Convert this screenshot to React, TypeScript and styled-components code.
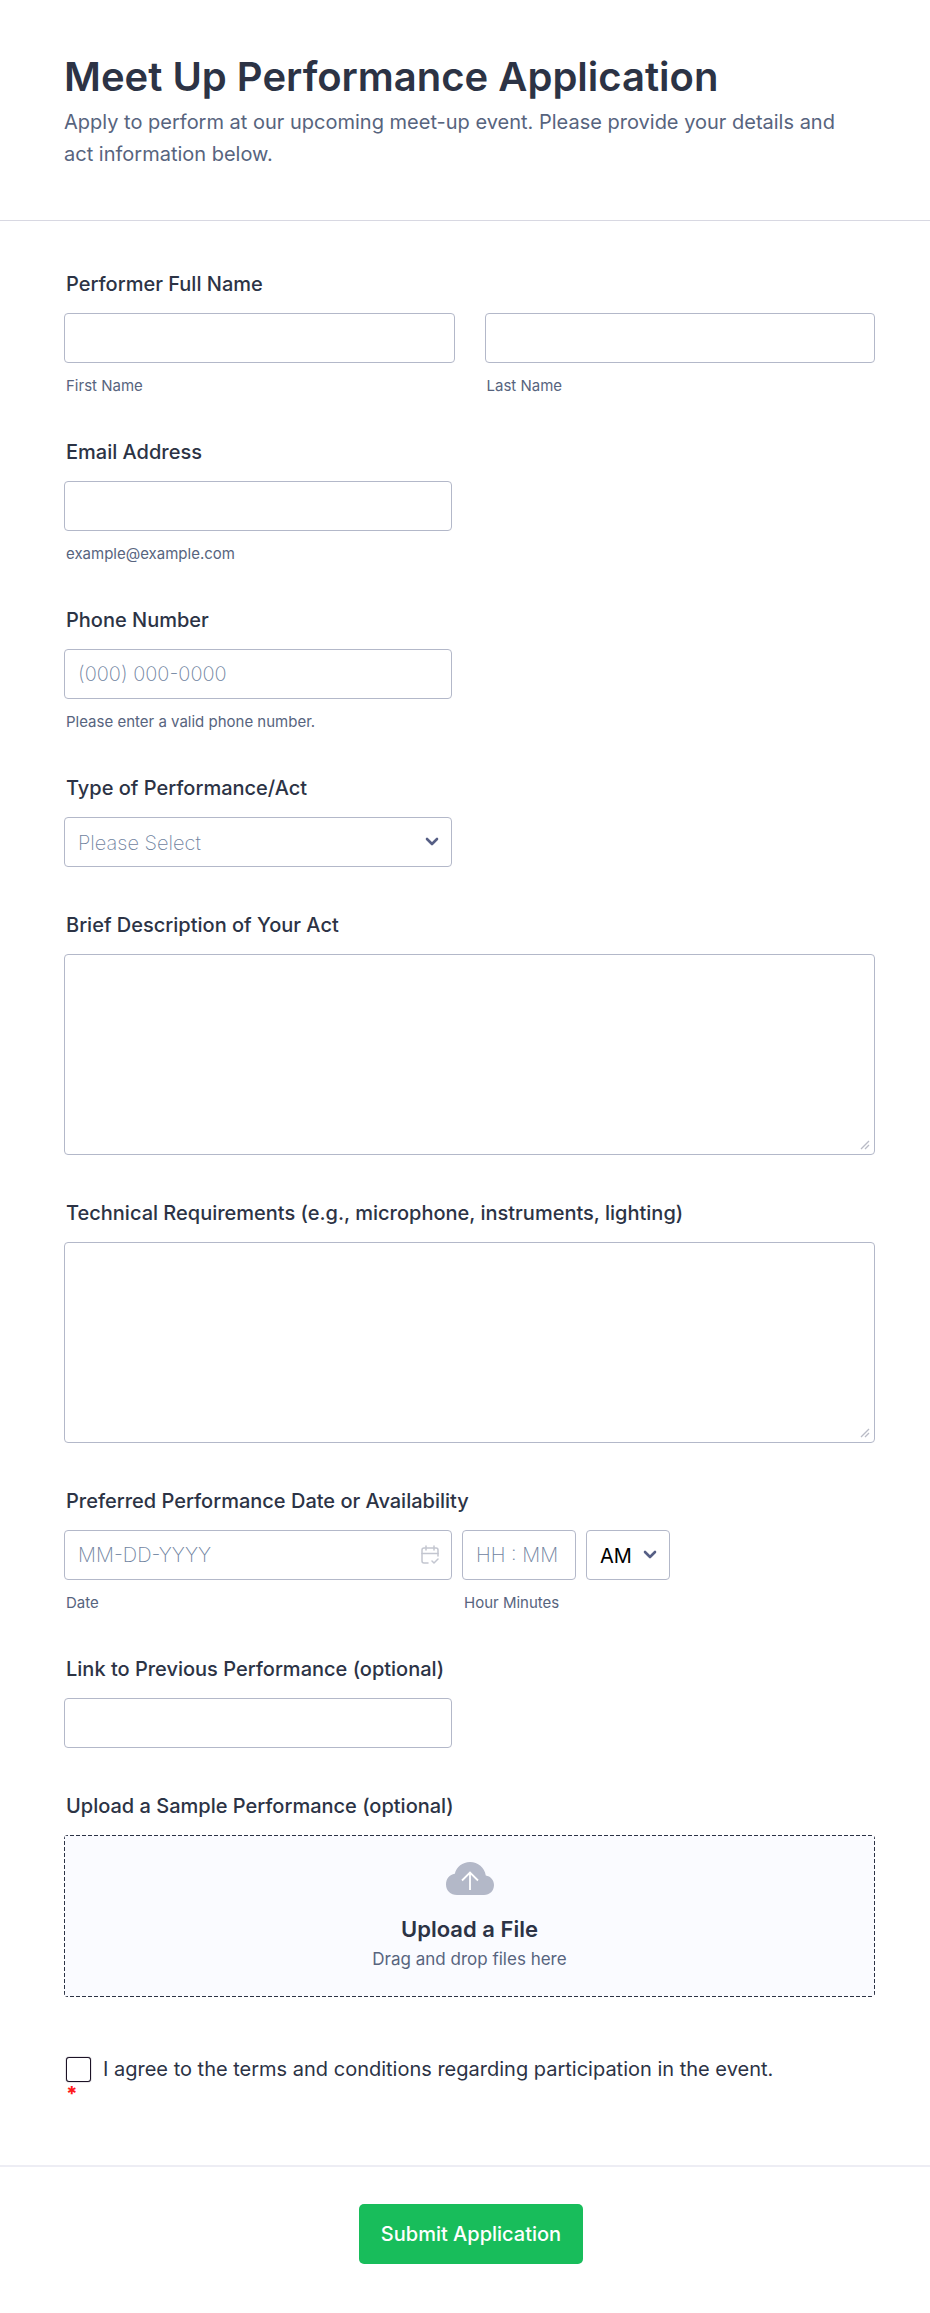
import React from "react";
import styled, { createGlobalStyle } from "styled-components";

const colors = {
  heading: "#2c3345",
  muted: "#57647e",
  placeholder: "#6f83a0",
  border: "#b3b8c9",
  rule: "#d8d8e2",
  softRule: "#ededf4",
  green: "#18bd5b",
  red: "#ff1a1a",
  drop: "#fafbff",
};

const GlobalStyle = createGlobalStyle`
  *, *::before, *::after { box-sizing: border-box; }
  body {
    margin: 0;
    background: #ffffff;
    color: ${colors.heading};
    font-family: Inter, "Liberation Sans", sans-serif;
    font-size: 20px;
  }
  input, select, textarea, button { font: inherit; color: inherit; margin: 0; }
`;

const Form = styled.form`
  display: flex;
  flex-direction: column;
`;

const Header = styled.header`
  padding: 51px 64px 50px;
  border-bottom: 1px solid ${colors.rule};
`;

const Title = styled.h1`
  margin: 0;
  font-size: 40px;
  line-height: 52px;
  font-weight: 600;
`;

const Subtitle = styled.p`
  margin: 3px 0 0;
  max-width: 800px;
  color: ${colors.muted};
  line-height: 32px;
`;

const Fields = styled.div`
  display: flex;
  flex-direction: column;
  gap: 46px;
  padding: 51px 55px 60px 64px;
`;

const Field = styled.div`
  display: flex;
  flex-direction: column;
`;

const Group = styled.fieldset`
  min-width: 0;
  margin: 0;
  padding: 0;
  border: 0;
`;

const labelText = `
  display: block;
  padding: 0 2px;
  margin-bottom: 17px;
  line-height: 24px;
  font-weight: 500;
`;

const Label = styled.label`
  ${labelText}
`;

const Legend = styled.legend`
  ${labelText}
`;

const NameRow = styled.div`
  display: grid;
  grid-template-columns: 1fr 1fr;
  gap: 30px;
`;

const DateRow = styled.div`
  display: flex;
  align-items: flex-start;
  gap: 10px;
`;

const Cell = styled.div<{ $width?: string }>`
  display: flex;
  flex-direction: column;
  width: ${(p) => p.$width ?? "auto"};
  max-width: 100%;
`;

const Caption = styled.label`
  margin-top: 14px;
  padding: 0 2px;
  color: ${colors.muted};
  font-size: 15px;
  line-height: 17px;
  white-space: nowrap;
`;

const controlBox = `
  width: 100%;
  border: 1px solid ${colors.border};
  border-radius: 4px;
  background: #ffffff;
  outline-color: #2e69ff;
`;

const TextInput = styled.input`
  ${controlBox}
  height: 50px;
  padding: 0 13px;
  &::placeholder {
    color: ${colors.placeholder};
    font-weight: 200;
    opacity: 1;
  }
`;

const TextArea = styled.textarea`
  ${controlBox}
  display: block;
  height: 201px;
  padding: 12px 13px;
  resize: vertical;
  &::-webkit-resizer { background: transparent; }
`;

const ControlWrap = styled.div`
  position: relative;
`;

const Select = styled.select<{ $empty?: boolean }>`
  ${controlBox}
  height: 50px;
  padding: 1px 32px 0 13px;
  appearance: none;
  color: ${(p) => (p.$empty ? colors.placeholder : "#000000")};
  font-weight: ${(p) => (p.$empty ? 200 : 400)};
`;

const TrailingIcon = styled.span`
  position: absolute;
  top: 0;
  bottom: 0;
  right: 13px;
  display: flex;
  align-items: center;
  pointer-events: none;
`;

const Grip = styled.span`
  position: absolute;
  right: 5px;
  bottom: 5px;
  display: flex;
  pointer-events: none;
`;

const HALF = "388px";

const DropZone = styled.label`
  display: flex;
  flex-direction: column;
  align-items: center;
  padding: 27px 16px 26px;
  border-radius: 4px;
  background:
    repeating-linear-gradient(90deg, ${colors.heading} 0 4px, transparent 4px 6px) top / 100% 1px no-repeat,
    repeating-linear-gradient(90deg, ${colors.heading} 0 4px, transparent 4px 6px) bottom / 100% 1px no-repeat,
    repeating-linear-gradient(180deg, ${colors.heading} 0 4px, transparent 4px 6px) left / 1px 100% no-repeat,
    repeating-linear-gradient(180deg, ${colors.heading} 0 4px, transparent 4px 6px) right / 1px 100% no-repeat,
    ${colors.drop};
  cursor: pointer;
`;

const HiddenFile = styled.input`
  position: absolute;
  width: 1px;
  height: 1px;
  overflow: hidden;
  clip-path: inset(50%);
`;

const DropTitle = styled.span`
  margin-top: 20px;
  font-size: 22px;
  line-height: 28px;
  font-weight: 600;
`;

const DropHint = styled.span`
  margin-top: 4px;
  color: ${colors.muted};
  font-size: 17px;
  line-height: 24px;
`;

const Terms = styled.div`
  margin-top: 12px;
  padding: 0 2px;
`;

const TermsLabel = styled.label`
  display: flex;
  align-items: center;
  gap: 12px;
  line-height: 28px;
`;

const Checkbox = styled.input`
  appearance: none;
  flex: none;
  width: 25px;
  height: 25px;
  border: 1px solid #1c1226;
  border-radius: 3px;
  background: #ffffff;
  box-shadow: 0 0 1px #1c1226;
  &:checked { background: ${colors.heading}; }
`;

const Required = styled.div`
  color: ${colors.red};
  font-weight: 800;
  line-height: 22px;
`;

const Footer = styled.footer`
  display: flex;
  justify-content: center;
  padding: 37px 48px 49px 60px;
  border-top: 2px solid ${colors.softRule};
  border-bottom: 1px solid #f7f7f9;
`;

const Submit = styled.button`
  height: 60px;
  padding: 0 22px;
  border: 0;
  border-radius: 5px;
  background: ${colors.green};
  color: #ffffff;
  font-weight: 500;
  cursor: pointer;
`;

const Chevron = () => (
  <svg width="14" height="10" viewBox="0 0 14 10" fill="none" aria-hidden="true">
    <path d="M2 2l5 5 5-5" stroke="#565f85" strokeWidth="2.6" strokeLinecap="round" strokeLinejoin="round" />
  </svg>
);

const GripIcon = () => (
  <svg width="10" height="10" viewBox="0 0 10 10" fill="none" stroke="#b9bbc6" strokeWidth="1.3" aria-hidden="true">
    <path d="M1 9l8-8M5 9l4-4" />
  </svg>
);

const CalendarIcon = () => (
  <svg width="18" height="20" viewBox="0 0 18 20" fill="none" stroke="#c3c6d0" strokeWidth="1.5" strokeLinecap="round" strokeLinejoin="round" aria-hidden="true">
    <path d="M7 18H3a2 2 0 0 1-2-2V5a2 2 0 0 1 2-2h12a2 2 0 0 1 2 2v6" />
    <path d="M1 8.500h16M5 1v4M13 1v4" />
    <path d="M11 16l2 2L17 14" />
  </svg>
);

const CloudIcon = () => (
  <svg width="48" height="33" viewBox="0 0 48 33" fill="none" aria-hidden="true">
    <path d="M11 33C4.500 33 0 28.500 0 22.500 0 17 3.500 12.500 8.800 11.800 10.500 5 16.500 0 24 0c8 0 14.500 5.500 15.800 13.500C44.500 14.300 48 18 48 23c0 5.800-4.200 10-10 10z" fill="#b3b8c8" />
    <path d="M24 28V10.500M16 18.500l8-8 8 8" stroke="#ffffff" strokeWidth="1.800" />
  </svg>
);

export default function App() {
  const [act, setAct] = React.useState("");
  return (
    <>
      <GlobalStyle />
      <Form onSubmit={(e) => e.preventDefault()}>
        <Header>
          <Title>Meet Up Performance Application</Title>
          <Subtitle>
            Apply to perform at our upcoming meet-up event. Please provide your details and act information below.
          </Subtitle>
        </Header>

        <Fields>
          <Group>
            <Legend>Performer Full Name</Legend>
            <NameRow>
              <Cell>
                <TextInput id="first" type="text" />
                <Caption htmlFor="first">First Name</Caption>
              </Cell>
              <Cell>
                <TextInput id="last" type="text" />
                <Caption htmlFor="last">Last Name</Caption>
              </Cell>
            </NameRow>
          </Group>

          <Field>
            <Label htmlFor="email">Email Address</Label>
            <Cell $width={HALF}>
              <TextInput id="email" type="email" />
              <Caption htmlFor="email">example@example.com</Caption>
            </Cell>
          </Field>

          <Field>
            <Label htmlFor="phone">Phone Number</Label>
            <Cell $width={HALF}>
              <TextInput id="phone" type="tel" placeholder="(000) 000-0000" />
              <Caption htmlFor="phone">Please enter a valid phone number.</Caption>
            </Cell>
          </Field>

          <Field>
            <Label htmlFor="act">Type of Performance/Act</Label>
            <Cell $width={HALF}>
              <ControlWrap>
                <Select id="act" $empty={act === ""} value={act} onChange={(e) => setAct(e.target.value)}>
                  <option value="">Please Select</option>
                </Select>
                <TrailingIcon><Chevron /></TrailingIcon>
              </ControlWrap>
            </Cell>
          </Field>

          <Field>
            <Label htmlFor="description">Brief Description of Your Act</Label>
            <ControlWrap>
              <TextArea id="description" />
              <Grip><GripIcon /></Grip>
            </ControlWrap>
          </Field>

          <Field>
            <Label htmlFor="technical">Technical Requirements (e.g., microphone, instruments, lighting)</Label>
            <ControlWrap>
              <TextArea id="technical" />
              <Grip><GripIcon /></Grip>
            </ControlWrap>
          </Field>

          <Group>
            <Legend>Preferred Performance Date or Availability</Legend>
            <DateRow>
              <Cell $width={HALF}>
                <ControlWrap>
                  <TextInput id="date" type="text" placeholder="MM-DD-YYYY" />
                  <TrailingIcon><CalendarIcon /></TrailingIcon>
                </ControlWrap>
                <Caption htmlFor="date">Date</Caption>
              </Cell>
              <Cell $width="114px">
                <TextInput id="time" type="text" placeholder="HH : MM" />
                <Caption htmlFor="time">Hour Minutes</Caption>
              </Cell>
              <Cell $width="84px">
                <ControlWrap>
                  <Select aria-label="AM or PM" defaultValue="AM">
                    <option>AM</option>
                    <option>PM</option>
                  </Select>
                  <TrailingIcon><Chevron /></TrailingIcon>
                </ControlWrap>
              </Cell>
            </DateRow>
          </Group>

          <Field>
            <Label htmlFor="link">Link to Previous Performance (optional)</Label>
            <Cell $width={HALF}>
              <TextInput id="link" type="url" />
            </Cell>
          </Field>

          <Field>
            <Label htmlFor="sample">Upload a Sample Performance (optional)</Label>
            <DropZone>
              <HiddenFile id="sample" type="file" />
              <CloudIcon />
              <DropTitle>Upload a File</DropTitle>
              <DropHint>Drag and drop files here</DropHint>
            </DropZone>
          </Field>

          <Terms>
            <TermsLabel>
              <Checkbox type="checkbox" required />
              I agree to the terms and conditions regarding participation in the event.
            </TermsLabel>
            <Required>*</Required>
          </Terms>
        </Fields>

        <Footer>
          <Submit type="submit">Submit Application</Submit>
        </Footer>
      </Form>
    </>
  );
}
